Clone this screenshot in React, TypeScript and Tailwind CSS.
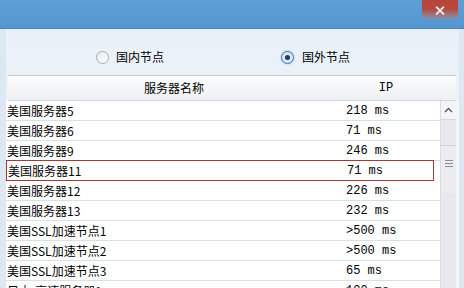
import React from "react";

const rows: [string, string][] = [
  ["美国服务器5", "218 ms"],
  ["美国服务器6", "71 ms"],
  ["美国服务器9", "246 ms"],
  ["美国服务器11", "71 ms"],
  ["美国服务器12", "226 ms"],
  ["美国服务器13", "232 ms"],
  ["美国SSL加速节点1", ">500 ms"],
  ["美国SSL加速节点2", ">500 ms"],
  ["美国SSL加速节点3", "65 ms"],
  ["日本-高速服务器1", "100 ms"],
];

const cjk = { fontFamily: '"Noto Sans CJK SC", "Noto Sans", sans-serif' };
const mono = { fontFamily: '"Liberation Mono", "Noto Sans CJK SC", monospace' };

export default function App() {
  return (
    <div className="w-[464px] h-[288px] overflow-hidden flex flex-col bg-[#f3f6fa] text-[12px] text-black" style={cjk}>
      {/* title bar */}
      <div className="h-[29px] shrink-0 bg-gradient-to-b from-[#5e9fd6] to-[#5496cf] border-b border-[#4a86bd] flex justify-end pr-[6px]">
        <div className="w-[36px] h-[19px] bg-gradient-to-b from-[#b8443a] via-[#b44a3e] to-[#7f8fb0] flex items-center justify-center rounded-b-[3px]">
          <span className="text-white font-bold text-[15px] leading-none mt-[4px]" style={{ fontFamily: '"DejaVu Sans", sans-serif' }}>✕</span>
        </div>
      </div>
      {/* body */}
      <div className="flex-1 flex min-h-0 border-l-[6px] border-r-[5px] border-[#dde8f2]">
        <div className="flex-1 flex flex-col min-h-0 bg-gradient-to-b from-[#e9f0f8] to-[#f6f8fb]">
          {/* radio section */}
          <div className="h-[46px] shrink-0 flex items-start pt-[21px]">
            <div className="w-[90px]" />
            <div className="flex items-center">
              <div className="w-[13px] h-[13px] rounded-full border border-[#a7adb5] bg-gradient-to-br from-[#e6e9ee] to-[#ffffff]" />
              <span className="ml-[7px] leading-[14px]">国内节点</span>
            </div>
            <div className="w-[117px]" />
            <div className="flex items-center">
              <div className="w-[13px] h-[13px] rounded-full border border-[#3f7fb8] bg-[#d6e8f7] flex items-center justify-center shadow-[0_0_2px_#7fb5e6]">
                <div className="w-[5px] h-[5px] rounded-full bg-[#2f3a48]" />
              </div>
              <span className="ml-[8px] leading-[14px]">国外节点</span>
            </div>
          </div>
          {/* table */}
          <div className="flex-1 flex flex-col min-h-0">
            <div className="h-[26px] shrink-0 ml-[2px] mr-[3px] border-t border-b border-t-[#c4c9d0] border-b-[#cfd6dd] bg-gradient-to-b from-[#fdfdfe] to-[#eef0f3] flex items-center">
              <div className="w-[332px] text-center">服务器名称</div>
              <div className="w-[92px] text-center" style={mono}>IP</div>
            </div>
            <div className="flex-1 flex min-h-0">
              <div className="flex-1 min-w-0 bg-white">
                {rows.map(([name, ms], i) => (
                  <div
                    key={i}
                    className={
                      i === 3
                        ? "h-[21px] flex items-center border border-[#a23a3a] mr-[6px] -mt-[1px] relative"
                        : "h-[20px] flex items-center border-b border-[#d6e0e6]"
                    }
                  >
                    <div className="w-[340px] pl-[1px] whitespace-nowrap">{name}</div>
                    <div className="whitespace-nowrap" style={mono}>{ms}</div>
                  </div>
                ))}
              </div>
              {/* scrollbar */}
              <div className="w-[16px] shrink-0 bg-[#e9e9ed] border-l border-[#d9dce1] flex flex-col">
                <div className="h-[19px] bg-[#f4f4f6] border-b border-[#d5d8dd] flex items-center justify-center">
                  <svg width="9" height="6" viewBox="0 0 9 6">
                    <path d="M1 5 L4.5 1.5 L8 5" stroke="#555" strokeWidth="1.3" fill="none" />
                  </svg>
                </div>
                <div className="h-[25px]" />
                <div className="h-[48px] bg-[#ececf0] border-t border-[#d0d3d8] flex flex-col items-center pt-[14px] gap-[2px]">
                  <div className="w-[8px] h-[1px] bg-[#8a8e94]" />
                  <div className="w-[8px] h-[1px] bg-[#8a8e94]" />
                  <div className="w-[8px] h-[1px] bg-[#8a8e94]" />
                </div>
              </div>
              <div className="w-[3px] shrink-0 bg-[#f3f6fa]" />
            </div>
          </div>
        </div>
      </div>
    </div>
  );
}
